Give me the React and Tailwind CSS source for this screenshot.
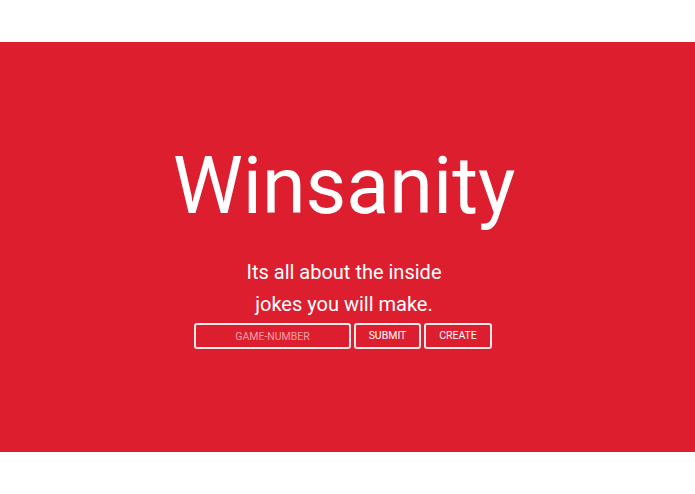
export default function App() {
  return (
    <div className="w-[695px] h-[494px] bg-white flex flex-col" style={{ fontFamily: "Roboto, 'Liberation Sans', sans-serif" }}>
      <div className="h-[42px]" />
      <main className="h-[410px] bg-[#dd1e2f] flex flex-col items-center pr-[7px] text-white">
        <h1 className="mt-[96px] text-[79px] leading-[96px] font-normal">Winsanity</h1>
        <p className="mt-[22px] text-[20px] leading-[32px] text-center">
          Its all about the inside
          <br />
          jokes you will make.
        </p>
        <div className="mt-[3px] mr-[2px] flex gap-[3px]">
          <input
            type="text"
            placeholder="GAME-NUMBER"
            className="w-[157px] h-[26px] border-2 border-white/90 rounded-[3px] bg-transparent text-center text-[10.5px] text-white placeholder:text-[#f1a0a8] outline-none"
          />
          <button className="w-[67px] h-[26px] border-2 border-white/90 rounded-[3px] text-[10.5px] text-white">SUBMIT</button>
          <button className="w-[68px] h-[26px] border-2 border-white/90 rounded-[3px] text-[10.5px] text-white">CREATE</button>
        </div>
      </main>
    </div>
  );
}
